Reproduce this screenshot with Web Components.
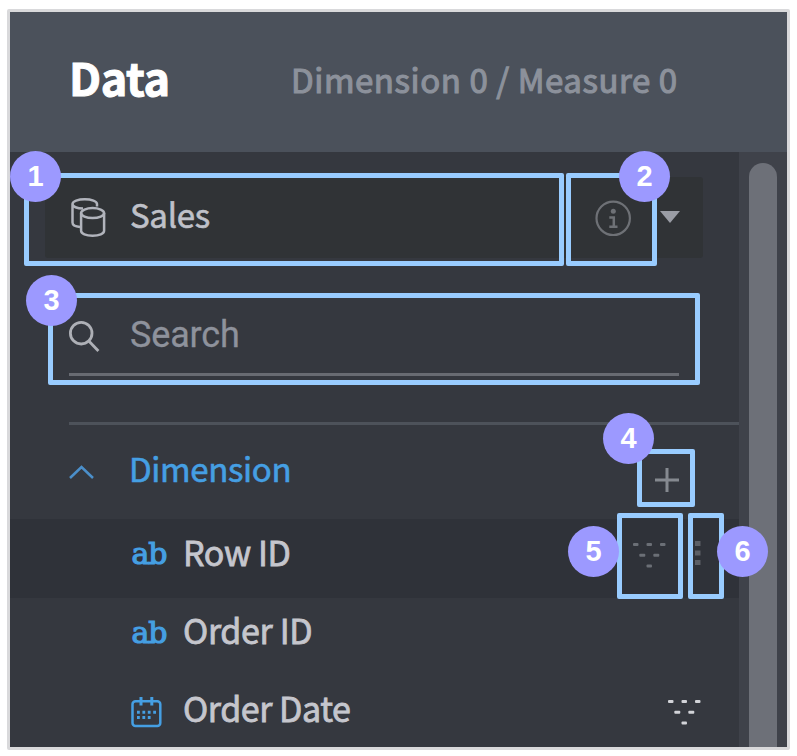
<!DOCTYPE html>
<html lang="en"><head><meta charset="utf-8"><title>Data panel</title>
<style>
html,body{margin:0;background:#fff;width:797px;height:756px;overflow:hidden}
body{position:relative;font-family:"Noto Sans CJK KR","Noto Sans CJK SC",sans-serif}
</style></head><body>
<data-panel>
  <panel-header slot="header" counts="Dimension 0 / Measure 0">Data</panel-header>
  <source-select>Sales</source-select>
  <search-field>Search</search-field>
  <field-group label="Dimension">
    <field-row active icon="ab" style="--sp:-0.4px">Row ID</field-row>
    <field-row icon="ab" style="--sp:-0.35px">Order ID</field-row>
    <field-row icon="date" style="--sp:-0.45px">Order Date</field-row>
  </field-group>
</data-panel>
<call-out n="1" style="--x:24px;--y:173px;--w:540px;--h:93px;--bx:10px;--by:151px"></call-out>
<call-out n="2" style="--x:566px;--y:173px;--w:91px;--h:93px;--bx:619px;--by:151px"></call-out>
<call-out n="3" style="--x:48px;--y:293px;--w:652px;--h:92px;--bx:26px;--by:275px"></call-out>
<call-out n="4" style="--x:637px;--y:449px;--w:58px;--h:58px;--bx:603px;--by:413px"></call-out>
<call-out n="5" style="--x:617px;--y:513px;--w:66px;--h:86px;--bx:568px;--by:525.5px"></call-out>
<call-out n="6" style="--x:688px;--y:513px;--w:36px;--h:86px;--bx:717px;--by:525.5px"></call-out>
<script>
const define=(name,html)=>customElements.define(name,class extends HTMLElement{
  connectedCallback(){
    if(this.shadowRoot)return;
    this.attachShadow({mode:'open'}).innerHTML=typeof html==='function'?html(this):html;
  }
});

define('data-panel',`<style>
:host{display:flex;flex-direction:column;box-sizing:border-box;width:783px;height:741px;margin:9px 0 0 7px;border:3px solid #d9d9db;border-radius:2px;background:#35383f;overflow:hidden}
.body{flex:1;display:flex;min-height:0}
main{width:729px;overflow:hidden}
.track{flex:1;background:#3f424a;padding:11px 10px 0;box-sizing:border-box}
.thumb{height:640px;border-radius:14px;background:#6d7078}
</style><slot name="header"></slot><div class="body"><main><slot></slot></main><div class="track"><div class="thumb"></div></div></div>`);

define('panel-header',el=>`<style>
:host{display:flex;box-sizing:border-box;height:140px;flex:none;padding-left:59px;background:#4b515b;white-space:nowrap}
b{width:222px;font-size:45px;line-height:130px;color:#fff;letter-spacing:-.4px;-webkit-text-stroke:1px #fff}
span{font-size:33px;line-height:134px;color:#8c919b;letter-spacing:.56px;-webkit-text-stroke:1.1px #8c919b}
</style><b><slot></slot></b><span>${el.getAttribute('counts')}</span>`);

define('source-select',`<style>
:host{display:flex;align-items:center;box-sizing:border-box;width:658px;height:81px;margin:25px 0 0 35px;padding:0 23px 0 25px;background:#303336;border-radius:3px;color:#bfc1c9}
span{flex:1;margin-left:23px;font-size:33px;line-height:75px;height:81px;letter-spacing:-.3px;-webkit-text-stroke:.6px #bfc1c9}
svg{flex:none;display:block}
</style>
<svg width="37" height="42" viewBox="0 0 37 42" fill="none" stroke="#b1b4bc" stroke-width="2.5"><path d="M27 9.5V7C27 4.4 21.5 2.3 14.8 2.3S2.5 4.4 2.5 7V25.5C2.5 27.7 5 29.6 10 30M2.5 7C2.5 9.6 7 11.5 13 11.6"/><ellipse cx="22.6" cy="16.1" rx="11.5" ry="5"/><path d="M11.1 16.1V33.8C11.1 36.7 16 38.7 22.6 38.7S34.1 36.7 34.1 33.8V16.1"/></svg>
<span><slot></slot></span>
<svg width="36" height="38" viewBox="0 0 36 38" fill="none" stroke="#6e7176" stroke-width="2.2"><circle cx="18.2" cy="19.3" r="16.7"/><path d="M14.3 18.5H18.8V27.5M14.3 27.7H22.5" stroke-width="2.5"/><circle cx="18.3" cy="12.3" r="2.5" fill="#6e7176" stroke="none"/></svg>
<svg width="20" height="12" viewBox="0 0 20 12" style="margin:-2px 0 0 29px"><path d="M0 0H20L10 12Z" fill="#9a9da5"/></svg>`);

define('search-field',`<style>
:host{display:flex;box-sizing:border-box;width:610px;height:84px;margin:34px 0 0 59px;border-bottom:3px solid #686b72;color:#8e929c}
svg{flex:none;margin-top:29px}
span{font:36px/86px Roboto,sans-serif;margin-left:30px;letter-spacing:-.15px;-webkit-text-stroke:.3px #8e929c}
</style><svg width="31" height="32" viewBox="0 0 31 32" fill="none" stroke="#aeb0b6" stroke-width="2.8"><circle cx="12.2" cy="12.2" r="10.8"/><path d="M19.8 20L29.4 30"/></svg><span><slot></slot></span>`);

define('field-group',el=>`<style>
:host{display:block;margin-top:46px}
.line{height:3px;margin-left:59px;background:#4d525a}
header{display:flex;height:94px;padding-left:59px;color:#459fe3}
header svg{flex:none;margin-top:40px}
span{flex:none;width:526px;margin-left:35px;font-size:33px;line-height:86px;letter-spacing:-.35px;-webkit-text-stroke:.6px #459fe3}
header .plus{margin-top:43px}
</style><div class="line"></div><header><svg width="25" height="14" viewBox="0 0 25 14"><path d="M1 13L12.5 2L24 13" fill="none" stroke="#4b8fca" stroke-width="2.5"/></svg><span>${el.getAttribute('label')}</span><svg class="plus" width="24" height="24" viewBox="0 0 24 24"><path d="M12 0V24M0 12H24" stroke="#858990" stroke-width="3" fill="none"/></svg></header><slot></slot>`);

const dots=`<svg class="filter" width="34" height="26" viewBox="0 0 34 26" fill="currentColor"><rect x="1" y="1" width="5.5" height="3" rx="1"/><rect x="14.5" y="1" width="5.5" height="3" rx="1"/><rect x="28" y="1" width="5.5" height="3" rx="1"/><rect x="7.3" y="11.8" width="6" height="3" rx="1"/><rect x="21.3" y="11.8" width="6" height="3" rx="1"/><rect x="14.5" y="22.5" width="5.5" height="3" rx="1"/></svg>`;
const calendar=`<svg width="31" height="31" viewBox="0 0 31 31" fill="none" stroke="#459fe3" stroke-width="2.5"><rect x="1.5" y="4.3" width="27.8" height="24.8" rx="3"/><path d="M10 0V8.5M20.8 0V8.5" stroke-width="3"/><path d="M6 15.3H26M6 20.6H21" stroke-width="3" stroke-dasharray="2.8 2.6"/></svg>`;
define('field-row',el=>{
  const on=el.hasAttribute('active'),date=el.getAttribute('icon')==='date';
  return `<style>
:host{display:flex;box-sizing:border-box;height:${on?79:78}px;padding-left:121px;background:${on?'#2f3239':'transparent'};color:#c5c6cd}
.icon{flex:none;width:52px;height:100%;color:#459fe3}
.icon svg{display:block;margin-top:21px}
.ab{font:30px/69px "DejaVu Serif",serif;letter-spacing:-1.2px;margin-left:.5px;-webkit-text-stroke:1.2px #459fe3}
.name{width:${on?449:484}px;flex:none;font-size:34px;line-height:${on?66:64}px;letter-spacing:var(--sp,0);-webkit-text-stroke:.8px #c5c6cd}
.filter{flex:none;margin-top:${on?23:22.5}px;color:${on?'#6b6f76':'#d2d3d8'}}
.more{flex:none;margin:22px 0 0 29px}
</style><div class="icon">${date?calendar:'<span class="ab">ab</span>'}</div><span class="name"><slot></slot></span>${on||date?dots:''}${on?'<svg class="more" width="6" height="27" viewBox="0 0 6 27" fill="#5c5f66"><rect width="5.5" y="0" height="5"/><rect width="5.5" y="9.5" height="5"/><rect width="5.5" y="19" height="5"/></svg>':''}`});

define('call-out',el=>`<style>
.box{position:absolute;box-sizing:border-box;left:var(--x);top:var(--y);width:var(--w);height:var(--h);border:5px solid #99ccff;border-radius:2px}
.badge{position:absolute;z-index:2;left:var(--bx);top:var(--by);width:51px;height:51px;border-radius:50%;background:#9c99ff;color:#fff;font:bold 29px/51px "Liberation Sans",Arial,sans-serif;text-align:center}
</style><div class="box"></div><div class="badge">${el.getAttribute('n')}</div>`);
</script>
</body></html>
